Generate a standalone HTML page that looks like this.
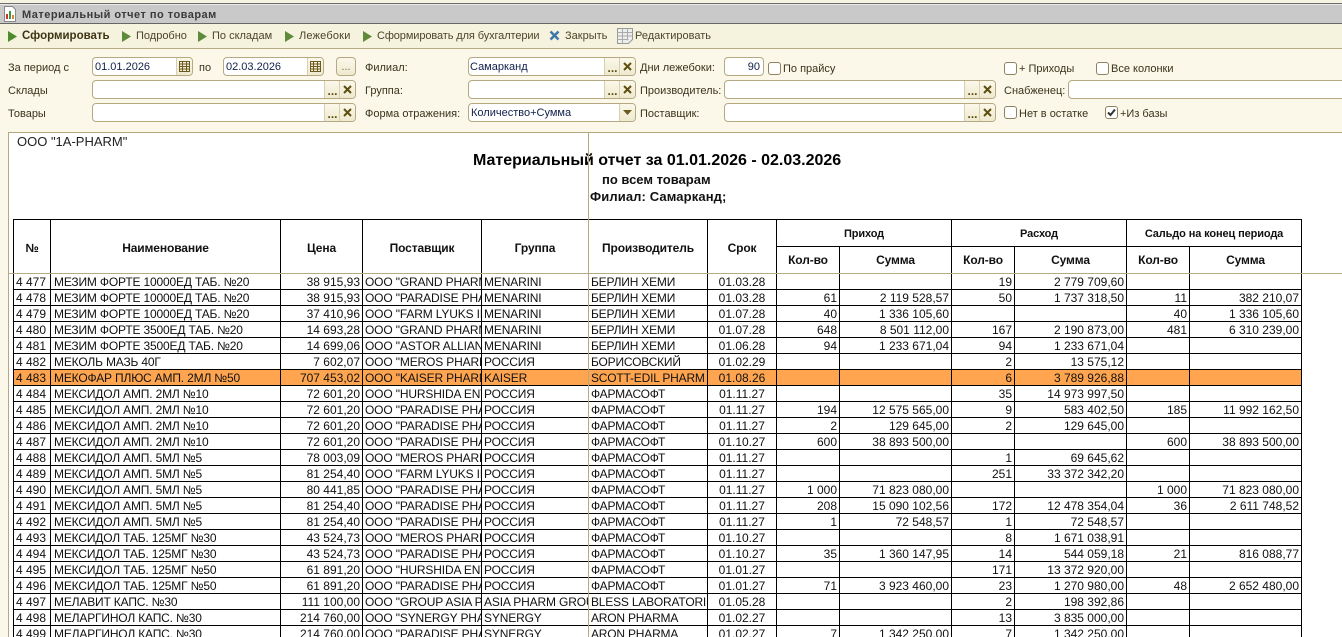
<!DOCTYPE html>
<html lang="ru"><head><meta charset="utf-8"><title>Материальный отчет по товарам</title>
<style>
html,body{margin:0;padding:0;width:1342px;height:637px;overflow:hidden;background:#fbf8e9;font-family:"Liberation Sans",Arial,sans-serif;}
.a{position:absolute;}
#root{position:relative;width:1342px;height:637px;overflow:hidden;}
.l{position:absolute;font-size:11px;line-height:14px;color:#37331c;white-space:nowrap;}
.f{position:absolute;box-sizing:border-box;height:19px;background:#fff;border:1px solid #b5a983;border-radius:4px;font-size:11px;line-height:19px;color:#10204a;padding-left:2px;white-space:nowrap;overflow:hidden;}
.s{position:absolute;top:0;bottom:0;width:15px;background:linear-gradient(#fbf8ea,#efe9cf);border-left:1px solid #d6cfb0;color:#5e4f10;text-align:center;line-height:17px;}
.d{font:bold 12px/20px "Liberation Sans",sans-serif;letter-spacing:0;}
.s svg{display:block;margin:4px auto 0;}
.c{position:absolute;box-sizing:border-box;width:13px;height:13px;background:#fff;border:1px solid #8d8360;border-radius:3px;}
.tb{position:absolute;top:29px;font-size:11px;line-height:15px;color:#4b4628;white-space:nowrap;}
.t{position:absolute;left:0;top:0;border-collapse:separate;border-spacing:0;table-layout:fixed;width:1289px;border-left:1px solid #000;border-top:1px solid #000;font-size:12px;color:#111;}
.t td,.t th{box-sizing:border-box;border-right:1px solid #000;border-bottom:1px solid #000;overflow:hidden;white-space:nowrap;padding:2px 2px 0;height:16px;line-height:13px;font-weight:normal;}
.t th{font-weight:bold;text-align:center;height:27px;padding:0;line-height:24px;letter-spacing:-.12px;}
.t th[rowspan],.t th[colspan]{padding-top:2px;}
.t td:nth-child(2){padding-left:3px;letter-spacing:-.17px;}
.t td:nth-child(3),.t td:nth-child(8),.t td:nth-child(9),.t td:nth-child(10),.t td:nth-child(11),.t td:nth-child(12),.t td:nth-child(13){text-align:right;}
.t td:nth-child(7){text-align:center;}
.t td:nth-child(4),.t td:nth-child(5){padding-right:0;padding-left:2px;letter-spacing:-.15px;}
.t td:nth-child(6){padding-right:0;letter-spacing:-.2px;}
.t tr.o td{background:#ffa550;}
</style></head><body><div id="root">
<div class="a" style="left:0;top:0;width:1342px;height:3px;background:#f6f3e0"></div>
<div class="a" style="left:0;top:3px;width:1342px;height:1px;background:#6d6d6d"></div>
<div class="a" style="left:0;top:4px;width:1342px;height:1px;background:#e8e8e8"></div>
<div class="a" style="left:0;top:5px;width:1342px;height:19px;background:#c9c9c9;border-bottom:1px solid #666;box-sizing:border-box"></div>
<svg class="a" style="left:3px;top:6px" width="14" height="16" viewBox="0 0 14 16"><path d="M1.5.5h8l3 3v12h-11z" fill="#fff" stroke="#8a8a8a"/><rect x="3" y="8" width="2" height="5" fill="#c33"/><rect x="6" y="5" width="2" height="8" fill="#3a9a3a"/><rect x="9" y="9" width="2" height="4" fill="#c84"/></svg>
<div class="a" style="left:22px;top:8px;font-size:11px;line-height:15px;font-weight:bold;letter-spacing:.48px;color:#3a3a3a;white-space:nowrap">Материальный отчет по товарам</div>
<div class="a" style="left:0;top:24px;width:1342px;height:25px;background:#f5f2de;border-bottom:1px solid #b5a983;box-sizing:border-box"></div>

<svg class="a" style="left:8px;top:31px" width="10" height="12"><path d="M0 0L9 5.500L0 11z" fill="#4f8a2c"/></svg>
<div class="tb" style="left:22px;font-weight:bold;font-size:11.500px;color:#3f3414">Сформировать</div>
<svg class="a" style="left:122px;top:31px" width="10" height="12"><path d="M0 0L9 5.500L0 11z" fill="#5f8a3c"/></svg>
<div class="tb" style="left:136px">Подробно</div>
<svg class="a" style="left:198px;top:31px" width="10" height="12"><path d="M0 0L9 5.500L0 11z" fill="#5f8a3c"/></svg>
<div class="tb" style="left:212px">По складам</div>
<svg class="a" style="left:285px;top:31px" width="10" height="12"><path d="M0 0L9 5.500L0 11z" fill="#5f8a3c"/></svg>
<div class="tb" style="left:299px;letter-spacing:.2px">Лежебоки</div>
<svg class="a" style="left:363px;top:31px" width="10" height="12"><path d="M0 0L9 5.500L0 11z" fill="#5f8a3c"/></svg>
<div class="tb" style="left:377px;letter-spacing:-.1px">Сформировать для бухгалтерии</div>
<svg class="a" style="left:549px;top:30px" width="11" height="11"><path d="M1.500 1.500L9.500 9.500M9.500 1.500L1.500 9.500" stroke="#3f77a8" stroke-width="2.600"/></svg>
<div class="tb" style="left:565px">Закрыть</div>
<svg class="a" style="left:617px;top:28px" width="16" height="17"><path d="M.5.500h15v11l-4 4h-11z" fill="#eee" stroke="#999"/><path d="M.5 4.500h15M.5 8h15M.5 11.500h11M5.500.5v15M10.500.5v12" stroke="#aaa"/></svg>
<div class="tb" style="left:635px">Редактировать</div>

<div class="l" style="left:8px;top:61px">За период с</div>
<div class="l" style="left:8px;top:84px">Склады</div>
<div class="l" style="left:8px;top:107px">Товары</div>
<div class="l" style="left:199px;top:61px">по</div>
<div class="l" style="left:365px;top:61px">Филиал:</div>
<div class="l" style="left:365px;top:84px">Группа:</div>
<div class="l" style="left:365px;top:107px">Форма отражения:</div>
<div class="l" style="left:640px;top:61px">Дни лежебоки:</div>
<div class="l" style="left:640px;top:84px">Производитель:</div>
<div class="l" style="left:640px;top:107px">Поставщик:</div>
<div class="l" style="left:783px;top:62px">По прайсу</div>
<div class="l" style="left:1019px;top:62px">+ Приходы</div>
<div class="l" style="left:1111px;top:62px">Все колонки</div>
<div class="l" style="left:1004px;top:84px">Снабженец:</div>
<div class="l" style="left:1019px;top:107px">Нет в остатке</div>
<div class="l" style="left:1120px;top:107px">+Из базы</div>

<div class="f" style="left:92px;top:57px;width:101px">01.01.2026<div class="s" style="right:0"><svg width="11" height="11" style="margin-top:3px"><path d="M.5.500h10v10h-10zM.5 3h10M.5 5.500h10M.5 8h10M3.500.5v10M7.500.5v10" fill="none" stroke="#6b5b1e"/></svg></div></div>
<div class="f" style="left:223px;top:57px;width:101px">02.03.2026<div class="s" style="right:0"><svg width="11" height="11" style="margin-top:3px"><path d="M.5.500h10v10h-10zM.5 3h10M.5 5.500h10M.5 8h10M3.500.5v10M7.500.5v10" fill="none" stroke="#6b5b1e"/></svg></div></div>
<div class="f" style="left:336px;top:57px;width:20px;background:linear-gradient(#fbf8ea,#efe9cf);text-align:center;padding:0;color:#7a6c3a;line-height:19px">...</div>

<div class="f" style="left:92px;top:80px;width:264px"><div class="s d" style="right:15px">...</div><div class="s" style="right:0"><svg width="9" height="9"><path d="M1 1L8 8M8 1L1 8" stroke="#5e4f10" stroke-width="2"/></svg></div></div>
<div class="f" style="left:92px;top:103px;width:264px"><div class="s d" style="right:15px">...</div><div class="s" style="right:0"><svg width="9" height="9"><path d="M1 1L8 8M8 1L1 8" stroke="#5e4f10" stroke-width="2"/></svg></div></div>
<div class="f" style="left:468px;top:57px;width:168px;padding-left:1px">Самарканд<div class="s d" style="right:15px">...</div><div class="s" style="right:0"><svg width="9" height="9"><path d="M1 1L8 8M8 1L1 8" stroke="#5e4f10" stroke-width="2"/></svg></div></div>
<div class="f" style="left:468px;top:80px;width:168px"><div class="s d" style="right:15px">...</div><div class="s" style="right:0"><svg width="9" height="9"><path d="M1 1L8 8M8 1L1 8" stroke="#5e4f10" stroke-width="2"/></svg></div></div>
<div class="f" style="left:468px;top:103px;width:168px">Количество+Сумма<div class="s" style="right:0"><svg width="9" height="5" style="margin-top:6px"><path d="M0 0h9L4.500 5z" fill="#6b5b1e"/></svg></div></div>
<div class="f" style="left:724px;top:57px;width:40px;text-align:right;padding-right:3px">90</div>
<div class="f" style="left:724px;top:80px;width:272px"><div class="s d" style="right:15px">...</div><div class="s" style="right:0"><svg width="9" height="9"><path d="M1 1L8 8M8 1L1 8" stroke="#5e4f10" stroke-width="2"/></svg></div></div>
<div class="f" style="left:724px;top:103px;width:272px"><div class="s d" style="right:15px">...</div><div class="s" style="right:0"><svg width="9" height="9"><path d="M1 1L8 8M8 1L1 8" stroke="#5e4f10" stroke-width="2"/></svg></div></div>
<div class="f" style="left:1068px;top:80px;width:290px"></div>

<div class="c" style="left:768px;top:62px"></div>
<div class="c" style="left:1004px;top:62px"></div>
<div class="c" style="left:1096px;top:62px"></div>
<div class="c" style="left:1004px;top:106px"></div>
<div class="c" style="left:1105px;top:106px"><svg width="11" height="11" style="display:block"><path d="M2 5.500L4.500 8L9 2.500" fill="none" stroke="#333" stroke-width="2"/></svg></div>

<div class="a" style="left:8px;top:132px;width:1334px;height:505px;background:#fff;overflow:hidden">
<div class="a" style="left:9px;top:2px;font-size:13px;line-height:15px;color:#222;white-space:nowrap">ООО "1A-PHARM"</div>
<div class="a" style="left:465px;top:20px;font-size:16px;line-height:18px;font-weight:bold;color:#000;white-space:nowrap">Материальный отчет за 01.01.2026 - 02.03.2026</div>
<div class="a" style="left:594px;top:40px;font-size:13px;line-height:15px;font-weight:bold;color:#111;white-space:nowrap">по всем товарам</div>
<div class="a" style="left:582px;top:57px;font-size:13px;line-height:15px;font-weight:bold;letter-spacing:.12px;color:#111;white-space:nowrap">Филиал: Самарканд;</div>
<div class="a" style="left:5px;top:87px;width:1295px;height:418px;overflow:hidden">
<table class="t"><colgroup><col style="width:37px"><col style="width:230px"><col style="width:82px"><col style="width:119px"><col style="width:107px"><col style="width:119px"><col style="width:69px"><col style="width:63px"><col style="width:112px"><col style="width:63px"><col style="width:112px"><col style="width:63px"><col style="width:112px"></colgroup>
<thead><tr><th rowspan="2">№</th><th rowspan="2">Наименование</th><th rowspan="2">Цена</th><th rowspan="2">Поставщик</th><th rowspan="2">Группа</th><th rowspan="2">Производитель</th><th rowspan="2">Срок</th><th colspan="2" style="font-size:11px">Приход</th><th colspan="2" style="font-size:11px">Расход</th><th colspan="2" style="font-size:11px">Сальдо на конец периода</th></tr>
<tr><th>Кол-во</th><th>Сумма</th><th>Кол-во</th><th>Сумма</th><th>Кол-во</th><th>Сумма</th></tr></thead>
<tbody>
<tr><td>4 477</td><td>МЕЗИМ ФОРТЕ 10000ЕД ТАБ. №20</td><td>38 915,93</td><td>ООО "GRAND PHARM"</td><td>MENARINI</td><td>БЕРЛИН ХЕМИ</td><td>01.03.28</td><td></td><td></td><td>19</td><td>2 779 709,60</td><td></td><td></td></tr>
<tr><td>4 478</td><td>МЕЗИМ ФОРТЕ 10000ЕД ТАБ. №20</td><td>38 915,93</td><td>ООО "PARADISE PHARM"</td><td>MENARINI</td><td>БЕРЛИН ХЕМИ</td><td>01.03.28</td><td>61</td><td>2 119 528,57</td><td>50</td><td>1 737 318,50</td><td>11</td><td>382 210,07</td></tr>
<tr><td>4 479</td><td>МЕЗИМ ФОРТЕ 10000ЕД ТАБ. №20</td><td>37 410,96</td><td>ООО "FARM LYUKS IMPEX"</td><td>MENARINI</td><td>БЕРЛИН ХЕМИ</td><td>01.07.28</td><td>40</td><td>1 336 105,60</td><td></td><td></td><td>40</td><td>1 336 105,60</td></tr>
<tr><td>4 480</td><td>МЕЗИМ ФОРТЕ 3500ЕД ТАБ. №20</td><td>14 693,28</td><td>ООО "GRAND PHARM"</td><td>MENARINI</td><td>БЕРЛИН ХЕМИ</td><td>01.07.28</td><td>648</td><td>8 501 112,00</td><td>167</td><td>2 190 873,00</td><td>481</td><td>6 310 239,00</td></tr>
<tr><td>4 481</td><td>МЕЗИМ ФОРТЕ 3500ЕД ТАБ. №20</td><td>14 699,06</td><td>ООО "ASTOR ALLIANCE"</td><td>MENARINI</td><td>БЕРЛИН ХЕМИ</td><td>01.06.28</td><td>94</td><td>1 233 671,04</td><td>94</td><td>1 233 671,04</td><td></td><td></td></tr>
<tr><td>4 482</td><td>МЕКОЛЬ МАЗЬ 40Г</td><td>7 602,07</td><td>ООО "MEROS PHARM"</td><td>РОССИЯ</td><td>БОРИСОВСКИЙ</td><td>01.02.29</td><td></td><td></td><td>2</td><td>13 575,12</td><td></td><td></td></tr>
<tr class="o"><td>4 483</td><td>МЕКОФАР ПЛЮС АМП. 2МЛ №50</td><td>707 453,02</td><td>ООО "KAISER PHARM"</td><td>KAISER</td><td>SCOTT-EDIL PHARM</td><td>01.08.26</td><td></td><td></td><td>6</td><td>3 789 926,88</td><td></td><td></td></tr>
<tr><td>4 484</td><td>МЕКСИДОЛ АМП. 2МЛ №10</td><td>72 601,20</td><td>ООО "HURSHIDA ENTER"</td><td>РОССИЯ</td><td>ФАРМАСОФТ</td><td>01.11.27</td><td></td><td></td><td>35</td><td>14 973 997,50</td><td></td><td></td></tr>
<tr><td>4 485</td><td>МЕКСИДОЛ АМП. 2МЛ №10</td><td>72 601,20</td><td>ООО "PARADISE PHARM"</td><td>РОССИЯ</td><td>ФАРМАСОФТ</td><td>01.11.27</td><td>194</td><td>12 575 565,00</td><td>9</td><td>583 402,50</td><td>185</td><td>11 992 162,50</td></tr>
<tr><td>4 486</td><td>МЕКСИДОЛ АМП. 2МЛ №10</td><td>72 601,20</td><td>ООО "PARADISE PHARM"</td><td>РОССИЯ</td><td>ФАРМАСОФТ</td><td>01.11.27</td><td>2</td><td>129 645,00</td><td>2</td><td>129 645,00</td><td></td><td></td></tr>
<tr><td>4 487</td><td>МЕКСИДОЛ АМП. 2МЛ №10</td><td>72 601,20</td><td>ООО "PARADISE PHARM"</td><td>РОССИЯ</td><td>ФАРМАСОФТ</td><td>01.10.27</td><td>600</td><td>38 893 500,00</td><td></td><td></td><td>600</td><td>38 893 500,00</td></tr>
<tr><td>4 488</td><td>МЕКСИДОЛ АМП. 5МЛ №5</td><td>78 003,09</td><td>ООО "MEROS PHARM"</td><td>РОССИЯ</td><td>ФАРМАСОФТ</td><td>01.11.27</td><td></td><td></td><td>1</td><td>69 645,62</td><td></td><td></td></tr>
<tr><td>4 489</td><td>МЕКСИДОЛ АМП. 5МЛ №5</td><td>81 254,40</td><td>ООО "FARM LYUKS IMPEX"</td><td>РОССИЯ</td><td>ФАРМАСОФТ</td><td>01.11.27</td><td></td><td></td><td>251</td><td>33 372 342,20</td><td></td><td></td></tr>
<tr><td>4 490</td><td>МЕКСИДОЛ АМП. 5МЛ №5</td><td>80 441,85</td><td>ООО "PARADISE PHARM"</td><td>РОССИЯ</td><td>ФАРМАСОФТ</td><td>01.11.27</td><td>1 000</td><td>71 823 080,00</td><td></td><td></td><td>1 000</td><td>71 823 080,00</td></tr>
<tr><td>4 491</td><td>МЕКСИДОЛ АМП. 5МЛ №5</td><td>81 254,40</td><td>ООО "PARADISE PHARM"</td><td>РОССИЯ</td><td>ФАРМАСОФТ</td><td>01.11.27</td><td>208</td><td>15 090 102,56</td><td>172</td><td>12 478 354,04</td><td>36</td><td>2 611 748,52</td></tr>
<tr><td>4 492</td><td>МЕКСИДОЛ АМП. 5МЛ №5</td><td>81 254,40</td><td>ООО "PARADISE PHARM"</td><td>РОССИЯ</td><td>ФАРМАСОФТ</td><td>01.11.27</td><td>1</td><td>72 548,57</td><td>1</td><td>72 548,57</td><td></td><td></td></tr>
<tr><td>4 493</td><td>МЕКСИДОЛ ТАБ. 125МГ №30</td><td>43 524,73</td><td>ООО "MEROS PHARM"</td><td>РОССИЯ</td><td>ФАРМАСОФТ</td><td>01.10.27</td><td></td><td></td><td>8</td><td>1 671 038,91</td><td></td><td></td></tr>
<tr><td>4 494</td><td>МЕКСИДОЛ ТАБ. 125МГ №30</td><td>43 524,73</td><td>ООО "PARADISE PHARM"</td><td>РОССИЯ</td><td>ФАРМАСОФТ</td><td>01.10.27</td><td>35</td><td>1 360 147,95</td><td>14</td><td>544 059,18</td><td>21</td><td>816 088,77</td></tr>
<tr><td>4 495</td><td>МЕКСИДОЛ ТАБ. 125МГ №50</td><td>61 891,20</td><td>ООО "HURSHIDA ENTER"</td><td>РОССИЯ</td><td>ФАРМАСОФТ</td><td>01.01.27</td><td></td><td></td><td>171</td><td>13 372 920,00</td><td></td><td></td></tr>
<tr><td>4 496</td><td>МЕКСИДОЛ ТАБ. 125МГ №50</td><td>61 891,20</td><td>ООО "PARADISE PHARM"</td><td>РОССИЯ</td><td>ФАРМАСОФТ</td><td>01.01.27</td><td>71</td><td>3 923 460,00</td><td>23</td><td>1 270 980,00</td><td>48</td><td>2 652 480,00</td></tr>
<tr><td>4 497</td><td>МЕЛАВИТ КАПС. №30</td><td>111 100,00</td><td>ООО "GROUP ASIA PHARM"</td><td>ASIA PHARM GROUP</td><td>BLESS LABORATORIES</td><td>01.05.28</td><td></td><td></td><td>2</td><td>198 392,86</td><td></td><td></td></tr>
<tr><td>4 498</td><td>МЕЛАРГИНОЛ КАПС. №30</td><td>214 760,00</td><td>ООО "SYNERGY PHARM"</td><td>SYNERGY</td><td>ARON PHARMA</td><td>01.02.27</td><td></td><td></td><td>13</td><td>3 835 000,00</td><td></td><td></td></tr>
<tr><td>4 499</td><td>МЕЛАРГИНОЛ КАПС. №30</td><td>214 760,00</td><td>ООО "PARADISE PHARM"</td><td>SYNERGY</td><td>ARON PHARMA</td><td>01.02.27</td><td>7</td><td>1 342 250,00</td><td>7</td><td>1 342 250,00</td><td></td><td></td></tr>
</tbody></table>
</div>
</div>
<div class="a" style="left:8px;top:132px;width:1334px;height:1px;background:#b5a983"></div>
<div class="a" style="left:8px;top:132px;width:1px;height:505px;background:#b5a983"></div>
<div class="a" style="left:588px;top:133px;width:1px;height:504px;background:#b5a983"></div>
<div class="a" style="left:9px;top:273px;width:1333px;height:1px;background:#b5a983"></div>
</div></body></html>
